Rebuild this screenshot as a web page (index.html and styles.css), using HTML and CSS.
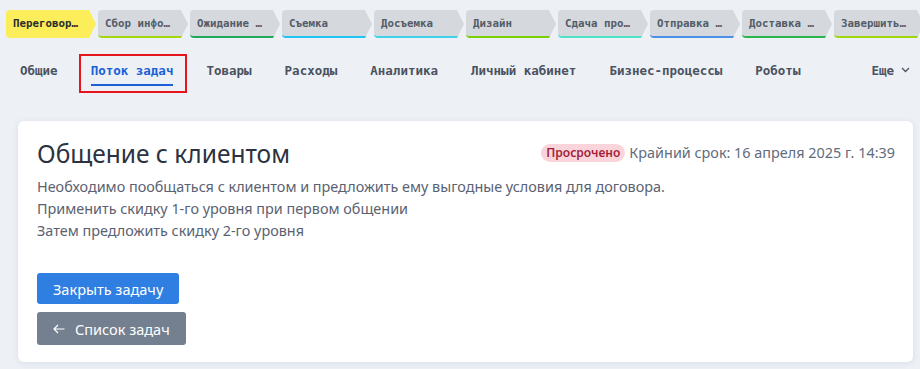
FILE: index.html
```html
<!DOCTYPE html>
<html lang="ru">
<head>
<meta charset="utf-8">
<title>Общение с клиентом</title>
<link rel="stylesheet" href="styles.css">
</head>
<body>
<div class="stages">
  <div class="stage stage-active">Переговор…</div>
  <div class="stage c2">Сбор инфо…</div>
  <div class="stage c3">Ожидание …</div>
  <div class="stage c4">Съемка</div>
  <div class="stage c5">Досъемка</div>
  <div class="stage c6">Дизайн</div>
  <div class="stage c7">Сдача про…</div>
  <div class="stage c8">Отправка …</div>
  <div class="stage c9">Доставка …</div>
  <div class="stage c10">Завершить…</div>
</div>
<nav class="tabs">
  <a class="tab">Общие</a>
  <a class="tab tab-active">Поток задач</a>
  <a class="tab">Товары</a>
  <a class="tab">Расходы</a>
  <a class="tab">Аналитика</a>
  <a class="tab">Личный кабинет</a>
  <a class="tab">Бизнес-процессы</a>
  <a class="tab">Роботы</a>
  <a class="tab tab-more">Еще <svg class="chev" width="9" height="6" viewBox="0 0 9 6"><path d="M1 1l3.5 3.5L8 1" fill="none" stroke="#4b5260" stroke-width="1.3"/></svg></a>
</nav>
<main class="card">
  <div class="card-head">
    <h1 class="title">Общение с клиентом</h1>
    <div class="deadline"><span class="badge">Просрочено</span><span class="due">Крайний срок: 16 апреля 2025 г. 14:39</span></div>
  </div>
  <div class="desc">
    <div>Необходимо пообщаться с клиентом и предложить ему выгодные условия для договора.</div>
    <div>Применить скидку 1-го уровня при первом общении</div>
    <div>Затем предложить скидку 2-го уровня</div>
  </div>
  <div class="actions">
    <button class="btn btn-primary">Закрыть задачу</button>
    <button class="btn btn-secondary"><svg class="arrow" width="12" height="10" viewBox="0 0 12 10"><path d="M11.5 5H1M5 1L1 5l4 4" fill="none" stroke="#fff" stroke-width="1.2"/></svg>Список задач</button>
  </div>
</main>
</body>
</html>
```
FILE: styles.css
```css
html, body { margin: 0; padding: 0; }
body {
  background: #edf1f6;
  width: 920px;
  height: 369px;
  overflow: hidden;
  font-family: "Noto Sans", "Open Sans", sans-serif;
}
.stages {
  display: flex;
  gap: 2px;
  padding: 10px 0 0 6px;
  white-space: nowrap;
}
.stage {
  flex: 0 0 90px;
  box-sizing: border-box;
  height: 28px;
  padding-left: 7px;
  display: flex;
  align-items: center;
  background: #d5d8dd;
  border-radius: 4px;
  clip-path: polygon(0 0, calc(100% - 7px) 0, 100% 50%, calc(100% - 7px) 100%, 0 100%);
  font-family: "DejaVu Sans Mono", monospace;
  font-weight: bold;
  font-size: 10.8px;
  color: #545c68;
  border-bottom: 2px solid transparent;
}
.stage-active { background: #fbee5a; color: #2c2c2c; }
.c2 { border-bottom-color: #a4d80c; }
.c3 { border-bottom-color: #22a85a; }
.c4 { border-bottom-color: #1ec4f2; }
.c5 { border-bottom-color: #3fd2ea; }
.c6 { border-bottom-color: #7ccf00; }
.c7 { border-bottom-color: #4ee2c8; }
.c8 { border-bottom-color: #4a8fe8; }
.c9 { border-bottom-color: #2cb54a; }
.c10 { border-bottom-color: #9fd60c; }

.tabs {
  display: flex;
  align-items: center;
  gap: 33px;
  height: 64px;
  padding: 0 10px 0 20px;
  font-family: "DejaVu Sans Mono", monospace;
  font-weight: bold;
  font-size: 12.5px;
  color: #4b5260;
}
.tab { position: relative; white-space: nowrap; }
.tab-active { color: #1a5fd6; }
.tab-active::after {
  content: "";
  position: absolute;
  left: 0; right: 0;
  bottom: -8px;
  height: 1.5px;
  background: #1a5fd6;
}
.tab-active::before {
  content: "";
  position: absolute;
  left: -12px; right: -14px;
  top: -9px; bottom: -15px;
  border: 2px solid #e8141c;
}
.tab-more { margin-left: auto; display: flex; align-items: center; gap: 7px; }
.chev { display: block; }

.card {
  margin: 19px 7px 0 18px;
  background: #fff;
  border-radius: 6px;
  box-shadow: 0 1px 6px rgba(40, 60, 90, 0.10);
  padding: 17px 18px 17px 19px;
  box-sizing: border-box;
  height: 241px;
}
.card-head {
  display: flex;
  align-items: center;
  justify-content: space-between;
}
.title {
  margin: 0;
  font-weight: normal;
  font-size: 24.5px;
  line-height: 32px;
  color: #2c3240;
}
.deadline { display: flex; align-items: center; gap: 4px; margin-top: -3px; }
.badge {
  background: #f9d5db;
  color: #a11f3c;
  font-weight: 600;
  font-size: 12px;
  line-height: 18px;
  padding: 0 5px;
  border-radius: 9px;
}
.due { font-size: 14.4px; color: #616c7c; }
.desc {
  margin-top: 6px;
  font-size: 14.4px;
  line-height: 22px;
  color: #5a6272;
}
.actions {
  margin-top: 31px;
  display: flex;
  flex-direction: column;
  align-items: flex-start;
  gap: 8px;
}
.btn {
  border: none;
  border-radius: 3px;
  font-family: "Noto Sans", "Open Sans", sans-serif;
  font-size: 14.5px;
  color: #fff;
  padding: 0 16px;
  display: flex;
  align-items: center;
}
.btn-primary { background: #2f7ee2; height: 31px; }
.btn-secondary { background: #74808f; height: 33px; }
.arrow { display: block; margin-right: 10px; }
```
